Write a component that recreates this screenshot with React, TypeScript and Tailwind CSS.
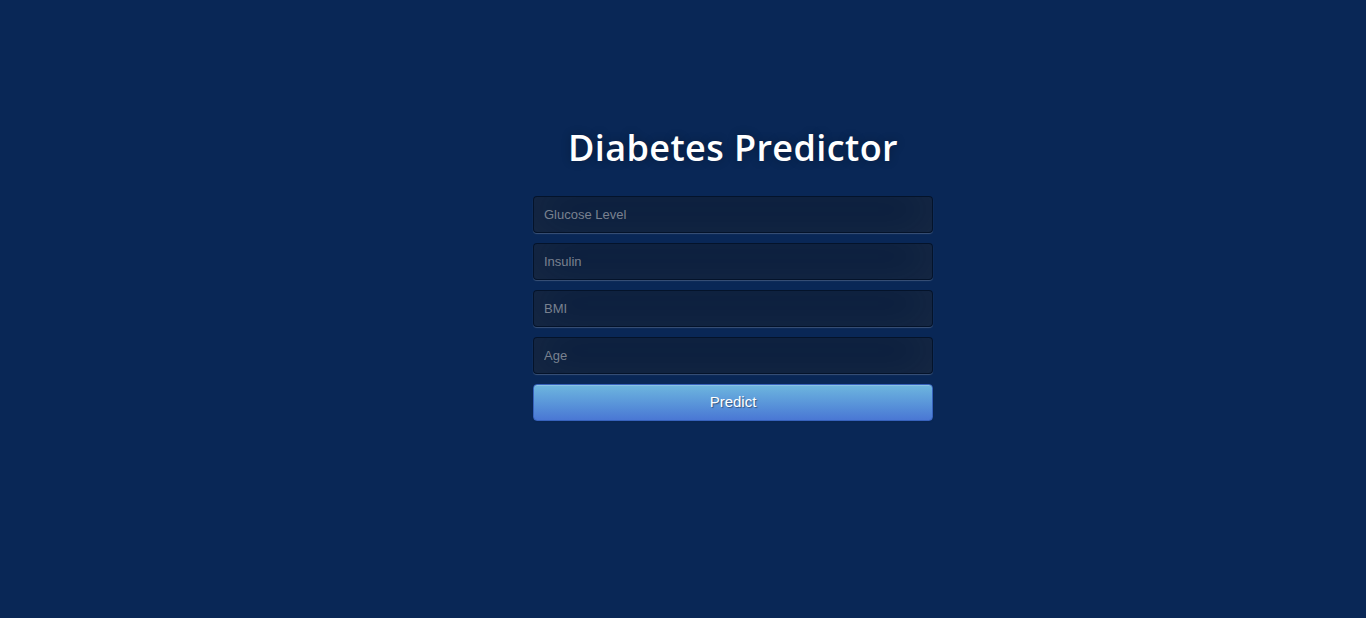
// Форма предсказания диабета: тёмно-синий фон, заголовок и четыре поля + кнопка.

const fields = ["Glucose Level", "Insulin", "BMI", "Age"];

export default function App() {
  return (
    <div className="min-h-[618px] w-full bg-[#092756] pt-[105px] [font-family:'Liberation_Sans',Arial,sans-serif]">
      <div className="ml-[calc(50%-150px)] w-[400px]">
        <h1 className="mt-[21px] mb-[26px] text-center text-[36px] leading-[44px] font-semibold tracking-[0.4px] text-white [font-family:'Open_Sans',sans-serif] [text-shadow:0_0_10px_rgba(0,0,0,0.3)]">
          Diabetes Predictor
        </h1>

        <form className="flex flex-col gap-[10px]" onSubmit={(e) => e.preventDefault()}>
          {fields.map((f) => (
            <input
              key={f}
              type="text"
              placeholder={f}
              className="h-[37px] w-full rounded-[4px] border border-black/30 bg-black/30 px-[10px] text-[13px] text-white outline-none
                         placeholder:text-[#79818f]
                         [box-shadow:inset_0_-5px_45px_rgba(100,100,100,0.2),0_1px_1px_rgba(255,255,255,0.2)]"
            />
          ))}

          {/* Кнопка с классическим бутстраповским градиентом */}
          <button
            type="submit"
            className="h-[37px] w-full rounded-[4px] border border-[#3762bc] bg-gradient-to-b from-[#6eb6de] to-[#4a77d4] text-[15px] text-white
                       [text-shadow:1px_1px_1px_rgba(0,0,0,0.4)]
                       [box-shadow:inset_0_1px_0_rgba(255,255,255,0.2),0_1px_2px_rgba(0,0,0,0.05)]"
          >
            Predict
          </button>
        </form>
      </div>
    </div>
  );
}
